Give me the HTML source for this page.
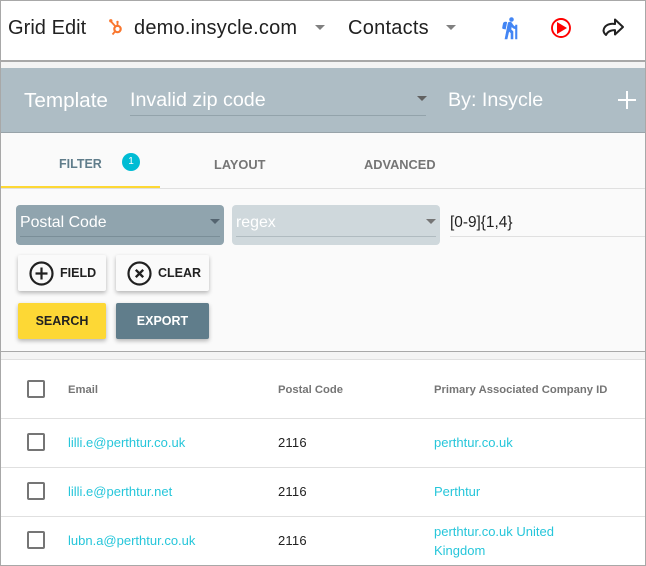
<!DOCTYPE html>
<html>
<head>
<meta charset="utf-8">
<style>
html,body{margin:0;padding:0;background:#fff}
#p{position:relative;width:646px;height:566px;overflow:hidden;background:#fff;font-family:"Liberation Sans",sans-serif;color:#212121}
#p div,#p svg,#p span.t{position:absolute}
.t{white-space:nowrap;display:block}
.a{color:#26c6da;font-size:13px;line-height:16px}
.n{font-size:13px;line-height:16px;letter-spacing:.2px}
.h{color:#757575;font-size:11.25px;font-weight:bold;line-height:14px}
.c{width:14px;height:14px;border:2px solid #757575;border-radius:2px;left:27px}
.l{left:1px;right:1px;height:1px;background:#e0e0e0}
.b{border-radius:2px;box-shadow:0 2px 4px rgba(0,0,0,.28);text-align:center;font-size:12.5px;line-height:36px;font-weight:bold;height:36px}
.tri{width:0;height:0;border-left:5px solid transparent;border-right:5px solid transparent;border-top:5px solid #808080}
</style>
</head>
<body>
<div id="p">
<div style="left:0;top:0;width:646px;height:60px;background:#fff"></div>
<div style="left:0;top:60px;width:646px;height:2px;background:#a8a8a8"></div>
<div style="left:0;top:62px;width:646px;height:6px;background:#f4f4f4"></div>
<div style="left:0;top:68px;width:646px;height:64px;background:#aebdc5"></div>
<div style="left:0;top:132px;width:646px;height:1px;background:#98a3a9"></div>
<div style="left:0;top:133px;width:646px;height:218px;background:#fafafa"></div>
<div style="left:0;top:351px;width:646px;height:1px;background:#a8a8a8"></div>
<div style="left:0;top:352px;width:646px;height:7px;background:#f4f4f4"></div>
<div style="left:0;top:359px;width:646px;height:1px;background:#e0e0e0"></div>

<span class="t" style="left:8px;top:17px;font-size:20px;line-height:22px;letter-spacing:.05px">Grid Edit</span>
<svg style="left:108px;top:18px" width="17" height="18" viewBox="0 0 17 18" fill="none" stroke="#f9772f"><circle cx="9.5" cy="11" r="3.2" stroke-width="2.2"/><path d="M3 3.500L8 9M9.500 4v5" stroke-width="1.8"/><circle cx="2.800" cy="2.800" r="1.700" fill="#f9772f" stroke="none"/><circle cx="9.500" cy="4" r="1.200" fill="#f9772f" stroke="none"/><path d="M7 13.500L4.500 16.500" stroke-width="1.800"/></svg>
<span class="t" style="left:134px;top:17px;font-size:20px;line-height:22px;letter-spacing:.2px">demo.insycle.com</span>
<div class="tri" style="left:315px;top:25px"></div>
<span class="t" style="left:348px;top:17px;font-size:20px;line-height:22px;letter-spacing:.25px">Contacts</span>
<div class="tri" style="left:446px;top:25px"></div>

<svg style="left:498px;top:16px" width="24" height="24" viewBox="0 0 24 24" fill="#4285f4" stroke="#4285f4" stroke-width=".6"><path d="M13.5 5.5c1.1 0 2-.9 2-2s-.9-2-2-2-2 .9-2 2 .9 2 2 2zM17.5 10.78c-1.23-.37-2.22-1.17-2.8-2.18l-1-1.6c-.41-.65-1.11-1-1.84-1-.78 0-1.59.5-1.78 1.44S7 23 7 23h2.1l1.8-8 2.1 2v6h2v-7.5l-2.1-2 .6-3c1 1.15 2.41 2.01 4 2.34V23H19V9h-1.5v1.78zM7.43 13.13l-2.12-.41c-.54-.11-.9-.63-.79-1.17l.76-3.93c.21-1.08 1.26-1.79 2.34-1.58l1.16.23-1.35 6.86z"/></svg>
<svg style="left:549px;top:16px" width="24" height="24" viewBox="0 0 24 24"><circle cx="12" cy="12" r="9" fill="none" stroke="#f00" stroke-width="1.9"/><path d="M8 6v12l10-6z" fill="#f00"/></svg>
<svg style="left:601px;top:16px" width="24" height="24" viewBox="0 0 24 24"><path d="M14 8V3.500l8 7.500-8 7.500v-4.400c-4.500 0-7.500 1.400-9 4.900-2.500-2-3-4-2-6.500 1.500-3.500 6-5.500 11-4.500z" fill="none" stroke="#212121" stroke-width="2" stroke-linejoin="round"/></svg>

<span class="t" style="left:24px;top:89px;font-size:20.7px;line-height:24px;color:#fff">Template</span>
<span class="t" style="left:130px;top:88px;font-size:19.7px;line-height:24px;color:#fff">Invalid zip code</span>
<div style="left:130px;top:115px;width:296px;height:1px;background:#93a3ab"></div>
<div class="tri" style="left:417px;top:96px;border-top-color:#616161"></div>
<span class="t" style="left:448px;top:88px;font-size:19.7px;line-height:24px;color:#fff">By: Insycle</span>
<div style="left:618px;top:99px;width:18px;height:2px;background:#fff"></div>
<div style="left:626px;top:91px;width:2px;height:18px;background:#fff"></div>

<span class="t" style="left:59px;top:157px;font-size:12.5px;line-height:15px;font-weight:bold;color:#607d8b">FILTER</span>
<div style="left:122px;top:153px;width:18px;height:18px;border-radius:50%;background:#00bcd4;color:#fff;font-size:10px;line-height:18px;text-align:center">1</div>
<span class="t" style="left:214px;top:157px;font-size:12.8px;line-height:15px;font-weight:bold;color:#757575">LAYOUT</span>
<span class="t" style="left:364px;top:157px;font-size:12.8px;line-height:15px;font-weight:bold;color:#757575">ADVANCED</span>
<div style="left:1px;top:188px;width:644px;height:1px;background:#e0e0e0"></div>
<div style="left:1px;top:186px;width:159px;height:2px;background:#fdd835"></div>

<div style="left:16px;top:205px;width:208px;height:40px;background:#90a4ae;border-radius:4px"></div>
<span class="t" style="left:20px;top:214px;font-size:15.9px;line-height:18px;color:#fff">Postal Code</span>
<div style="left:20px;top:236px;width:200px;height:1px;background:#7a8e98"></div>
<div class="tri" style="left:210px;top:219px;border-top-color:#546470"></div>

<div style="left:232px;top:205px;width:208px;height:40px;background:#cfd8dc;border-radius:4px"></div>
<span class="t" style="left:236px;top:214px;font-size:15.9px;line-height:18px;color:#fff">regex</span>
<div style="left:236px;top:236px;width:200px;height:1px;background:#b0bbc0"></div>
<div class="tri" style="left:426px;top:219px;border-top-color:#757575"></div>

<span class="t" style="left:450px;top:214px;font-size:15.4px;line-height:18px;color:#212121">[0-9]{1,4}</span>
<div style="left:450px;top:236px;width:196px;height:1px;background:#e0e0e0"></div>

<div class="b" style="left:18px;top:255px;width:88px;background:#fafafa"></div>
<svg style="left:28px;top:260px" width="27" height="27" viewBox="0 0 27 27" fill="none" stroke="#212121"><circle cx="13.5" cy="13.5" r="11" stroke-width="2.2"/><path d="M13.500 7.500v12M7.500 13.500h12" stroke-width="2.200"/></svg>
<span class="t" style="left:60px;top:265px;font-size:12.5px;line-height:16px;font-weight:bold">FIELD</span>
<div class="b" style="left:116px;top:255px;width:93px;background:#fafafa"></div>
<svg style="left:126px;top:260px" width="27" height="27" viewBox="0 0 27 27" fill="none" stroke="#212121"><circle cx="13.5" cy="13.5" r="11" stroke-width="2.2"/><path d="M9.800 9.800l7.400 7.400M17.200 9.800l-7.400 7.400" stroke-width="2.400"/></svg>
<span class="t" style="left:158px;top:265px;font-size:12.5px;line-height:16px;font-weight:bold">CLEAR</span>

<div class="b" style="left:18px;top:303px;width:88px;background:#fdd835">SEARCH</div>
<div class="b" style="left:116px;top:303px;width:93px;background:#607d8b;color:#fff">EXPORT</div>

<div class="c" style="top:380px"></div>
<span class="t h" style="left:68px;top:383px">Email</span>
<span class="t h" style="left:278px;top:383px">Postal Code</span>
<span class="t h" style="left:434px;top:383px">Primary Associated Company ID</span>
<div class="l" style="top:418px"></div>

<div class="c" style="top:433px"></div>
<span class="t a" style="left:68px;top:435px">lilli.e@perthtur.co.uk</span>
<span class="t n" style="left:278px;top:435px">2116</span>
<span class="t a" style="left:434px;top:435px">perthtur.co.uk</span>
<div class="l" style="top:467px"></div>

<div class="c" style="top:482px"></div>
<span class="t a" style="left:68px;top:484px">lilli.e@perthtur.net</span>
<span class="t n" style="left:278px;top:484px">2116</span>
<span class="t a" style="left:434px;top:484px">Perthtur</span>
<div class="l" style="top:516px"></div>

<div class="c" style="top:531px"></div>
<span class="t a" style="left:68px;top:533px">lubn.a@perthtur.co.uk</span>
<span class="t n" style="left:278px;top:533px">2116</span>
<span class="t a" style="left:434px;top:524px">perthtur.co.uk United</span>
<span class="t a" style="left:434px;top:543px">Kingdom</span>

<div style="left:0;top:0;width:646px;height:1px;background:#a8a8a8"></div>
<div style="left:0;top:565px;width:646px;height:1px;background:#a8a8a8"></div>
<div style="left:0;top:0;width:1px;height:566px;background:#a8a8a8"></div>
<div style="left:645px;top:0;width:1px;height:566px;background:#a8a8a8"></div>
</div>
</body>
</html>
